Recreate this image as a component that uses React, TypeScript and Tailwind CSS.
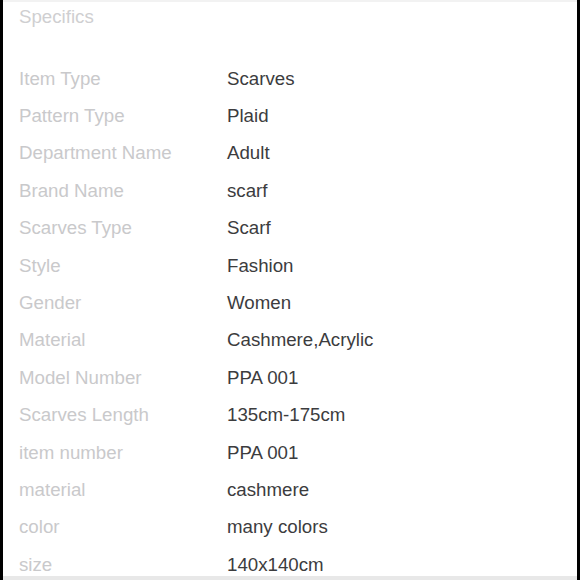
const specs = [
  ["Item Type", "Scarves"],
  ["Pattern Type", "Plaid"],
  ["Department Name", "Adult"],
  ["Brand Name", "scarf"],
  ["Scarves Type", "Scarf"],
  ["Style", "Fashion"],
  ["Gender", "Women"],
  ["Material", "Cashmere,Acrylic"],
  ["Model Number", "PPA 001"],
  ["Scarves Length", "135cm-175cm"],
  ["item number", "PPA 001"],
  ["material", "cashmere"],
  ["color", "many colors"],
  ["size", "140x140cm"],
];

export default function App() {
  return (
    <div className="h-[580px] w-[580px] overflow-hidden bg-black px-[3px]">
      <div className="h-[576px] border-t-2 border-[#f2f2f2] bg-white pt-[4px] font-['Liberation_Sans',Arial,sans-serif] text-[18.7px]">
        <div className="h-[22px] pl-[16px] leading-[22px] text-[#cfcfd1]">Specifics</div>
        <div className="mt-[32.3px]">
          {specs.map(([label, value]) => (
            <div key={label} className="flex h-[37.4px] items-center leading-none">
              <span className="w-[224px] shrink-0 pl-[16px] text-[#c9c9cb]">{label}</span>
              <span className="text-[#3c3c3e]">{value}</span>
            </div>
          ))}
        </div>
      </div>
      <div className="h-[4px] bg-[#e8e8e8]" />
    </div>
  );
}
